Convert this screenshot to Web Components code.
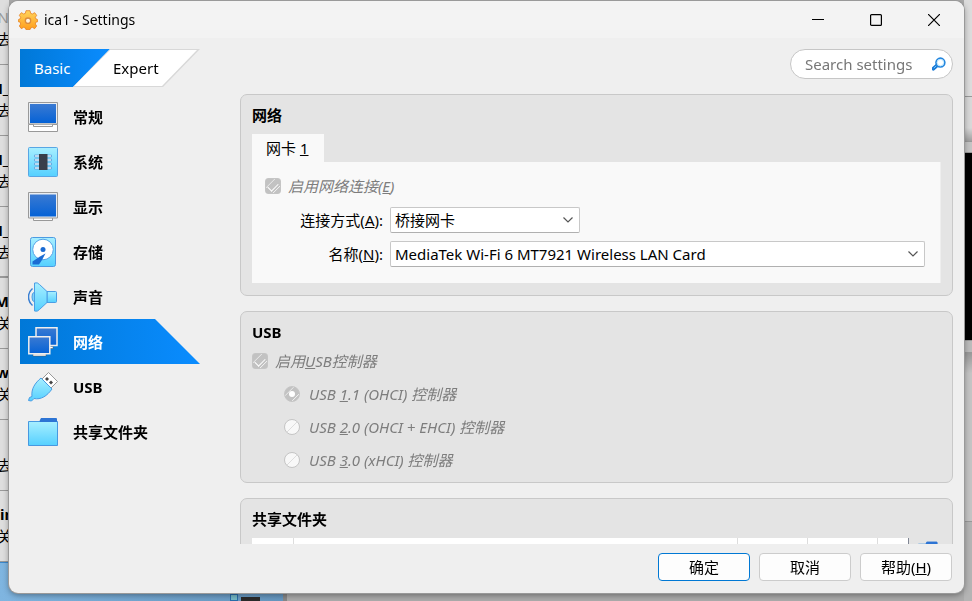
<!DOCTYPE html>
<html lang="zh-CN">
<head>
<meta charset="utf-8">
<title>ica1 - Settings</title>
<style>
body {
    margin: 0;
    min-height: 100vh;
    box-sizing: border-box;
    padding: 1px 8px 8px 9px;
    display: flex;
    overflow: hidden;
    font: 15px/20px "Noto Sans", "Noto Sans CJK SC", sans-serif;
    color: #000;
}
settings-window {
    flex: 1;
}
</style>
</head>
<body>
<desktop-backdrop></desktop-backdrop>
<settings-window heading="ica1 - Settings">
    <mode-tabs slot="header"></mode-tabs>
    <search-box slot="header" placeholder="Search settings"></search-box>

    <nav-list slot="nav">
        <nav-item icon="general">常规</nav-item>
        <nav-item icon="system">系统</nav-item>
        <nav-item icon="display">显示</nav-item>
        <nav-item icon="storage">存储</nav-item>
        <nav-item icon="audio">声音</nav-item>
        <nav-item icon="network" selected>网络</nav-item>
        <nav-item icon="usb">USB</nav-item>
        <nav-item icon="folder">共享文件夹</nav-item>
    </nav-list>

    <settings-section heading="网络">
        <tab-pane>
            <span slot="tab">网卡 <u>1</u></span>
            <choice-field type="checkbox" checked>启用网络连接(<u>E</u>)</choice-field>
            <select-field value="桥接网卡" short>连接方式(<u>A</u>):</select-field>
            <select-field value="MediaTek Wi-Fi 6 MT7921 Wireless LAN Card">名称(<u>N</u>):</select-field>
        </tab-pane>
    </settings-section>

    <settings-section heading="USB">
        <usb-options>
            <choice-field type="checkbox" checked>启用<u>U</u>SB控制器</choice-field>
            <choice-field slot="option" type="radio" checked>USB <u>1</u>.1 (OHCI) 控制器</choice-field>
            <choice-field slot="option" type="radio">USB <u>2</u>.0 (OHCI + EHCI) 控制器</choice-field>
            <choice-field slot="option" type="radio">USB <u>3</u>.0 (xHCI) 控制器</choice-field>
        </usb-options>
    </settings-section>

    <settings-section heading="共享文件夹">
        <folder-table></folder-table>
    </settings-section>

    <push-button slot="footer" primary>确定</push-button>
    <push-button slot="footer">取消</push-button>
    <push-button slot="footer">帮助(<u>H</u>)</push-button>
</settings-window>

<script>
const gradients = `
<defs>
    <linearGradient id="blue" x1="0" y1="0" x2="0" y2="1"><stop offset="0" stop-color="#3a7ad2"/><stop offset="1" stop-color="#0562d6"/></linearGradient>
    <linearGradient id="cyan" x1="0" y1="0" x2="0" y2="1"><stop offset="0" stop-color="#a8efff"/><stop offset="1" stop-color="#55d0ff"/></linearGradient>
    <linearGradient id="gold" x1="0" y1="0" x2="0" y2="1"><stop offset="0" stop-color="#ffd45c"/><stop offset="1" stop-color="#ff9d1c"/></linearGradient>
</defs>`;

const icons = {
    general: `
        <path d="M.5 22.500h29v7H.5z" fill="#fff" stroke="#999"/>
        <path d="M5.500 22.500v2h19v-2" fill="#fff" stroke="#999"/>
        <path d="M.5.5h29v21.500H.5z" fill="#e9edf2" stroke="#999"/>
        <path d="M2 2h26v19H2z" fill="url(#blue)"/>`,
    system: `
        <rect x=".5" y=".5" width="29" height="29" rx="1" fill="url(#cyan)" stroke="#58a6e4"/>
        <g fill="#fff" stroke="#5a9edb" stroke-width=".8"><path d="M6.500 8h17v2h-17zM6.500 12h17v2h-17zM6.500 16h17v2h-17zM6.500 20h17v2h-17z"/></g>
        <path d="M11 7h8.500v16H11z" fill="#383e49"/>`,
    display: `
        <path d="M5.500 25.500v3h19v-3z" fill="#fff" stroke="#999"/>
        <path d="M.5.5h29v25.500H.5z" fill="#e9edf2" stroke="#999"/>
        <path d="M2 2.500h26v22H2z" fill="url(#blue)"/>`,
    storage: `
        <rect x="2.500" y=".5" width="25" height="29" rx="2" fill="url(#cyan)" stroke="#4c9be2"/>
        <circle cx="15" cy="12.500" r="10.300" fill="#fff" stroke="#56a3e6"/>
        <circle cx="15" cy="12.500" r="2.500" fill="#1a6bd3"/>
        <path d="M17.500 16.500L12 19.500 4.500 24.500V27.500H11L14 23z" fill="#1a6bd3"/>`,
    audio: `
        <path d="M4.500 6.500C-.800 11-.800 19 4.500 23.500" fill="none" stroke="#397fd2" stroke-width="1.500"/>
        <ellipse cx="6" cy="15" rx="2" ry="4.500" fill="#7ed4f7" stroke="#4a9de4"/>
        <path d="M19 9.500h8.500q1 0 1 1v9q0 1-1 1H19z" fill="url(#cyan)" stroke="#4a9de4"/>
        <path d="M6.500 1q3-1 5 1.500L19 9.500v11l-7.500 7q-2 2.500-5 1.500z" fill="url(#cyan)" stroke="#4a9de4"/>`,
    network: `
        <path d="M15 19.500h10v2H15z" fill="#fff" stroke="#555" stroke-width=".5"/>
        <path d="M8 .8h21v17.700H8z" fill="url(#blue)" stroke="#eee" stroke-width="1.500"/>
        <path d="M5 27h13v2H5z" fill="#fff" stroke="#555" stroke-width=".5"/>
        <path d="M.8 9.800h21v17H.8z" fill="url(#blue)" stroke="#eee" stroke-width="1.500"/>`,
    usb: `
        <path d="M14 7L20.500.5 29.500 9.500 23 16z" fill="#fff" stroke="#999"/>
        <path d="M19 5l2 2-2 2-2-2zM23 8.500l2 2-2 2-2-2z" fill="#444"/>
        <path d="M13 6L24 17C19 24 13 28 6 26.500L3.500 29 .5 28.500 1.500 25.500 4 24.500C3 17 7 11 13 6z" fill="url(#cyan)" stroke="#4a9de4"/>`,
    folder: `
        <path d="M11 5l2-4h15l1 1v5H11z" fill="#2d74d4"/>
        <path d="M.5 4.500h29V28.500H.5z" fill="url(#cyan)" stroke="#4798e0"/>
        <path d="M11.500 5l2-4h14.500l1 1v3z" fill="#2d74d4"/>`,
    gear: `
        <path d="M12 1h6l1 4 2.500 1L25 4l3 4-2 3 1 2.500 2.500 1v3L27 18l-1 3 2 3-3 4-3.500-2-2.500 1-1 2.500h-6L11 27l-2.500-1L5 28l-3-4 2-3-1-3-2.500-.5v-3l2.500-1L4 11 2 8l3-4 3.500 2L11 5z" fill="url(#gold)" stroke="#e78222" stroke-width="1.200" stroke-linejoin="round"/>
        <circle cx="15" cy="16" r="4" fill="#fff3df" stroke="#db8c3e" stroke-width="2"/>`,
    search: `
        <path d="M11 18l-8 7" stroke="#1879d6" stroke-width="8" stroke-linecap="round"/>
        <path d="M10 18l-6 6" stroke="#79cbff" stroke-width="2"/>
        <circle cx="18" cy="12" r="9.500" fill="#fff" stroke="#2385de" stroke-width="3.500"/>
        <circle cx="18" cy="12" r="7" fill="none" stroke="#9ddcff" stroke-width="1.500"/>`
};

function icon(name, size) {
    return `<svg width="${size}" height="${size}" viewBox="0 0 30 30" aria-hidden="true">${gradients}${icons[name]}</svg>`;
}

// Attaches an open shadow root with the given markup
class BaseElement extends HTMLElement {
    constructor() {
        super();
        this.attachShadow({mode: 'open'});
    }

    connectedCallback() {
        this.shadowRoot.innerHTML = `<style>* { box-sizing: border-box; } button, input, select { font: inherit; margin: 0; } svg { display: block; flex: none; }</style>` + this.render();
    }
}

class DesktopBackdrop extends BaseElement {
    render() {
        const rows = [['N', '去'], ['N_', '去'], ['N_', '去'], ['N_', '去'], ['M', '关'], ['w', '关'], ['', '去'], ['in', '关']];
        return `
<style>
:host {
    position: fixed;
    inset: 0;
    z-index: -1;
    display: grid;
    grid-template-columns: 287px 1fr 8px;
    background: #ababab;
}
.machines {
    display: grid;
    grid-template-rows: 65px repeat(7, 71px) 1fr;
    overflow: hidden;
    border-right: 4px solid #888;
}
.machine {
    width: 9px;
    overflow: hidden;
    display: flex;
    flex-direction: column;
    justify-content: flex-end;
    gap: 2px;
    padding-bottom: 15px;
    border-bottom: 1px solid #999;
    background: #dedede;
}
.machine b { height: 20px; align-self: flex-end; }
.machine span { height: 20px; align-self: center; }
.machine:first-child b { color: #999; font-weight: 400; }
.machine:nth-child(4) { border-bottom-width: 2px; padding-bottom: 14px; }
.machine:nth-child(8) b { align-self: flex-start; }
.current {
    display: flex;
    align-items: flex-end;
    gap: 3px;
    padding-left: 230px;
    border-top: 1px solid #3b88cc;
    background: linear-gradient(90deg, #7fb5e0, #6697c0);
}
.current i { width: 8px; height: 7px; background: #75b9c7; border: 1px solid #286daa; }
.current i + i { width: 19px; height: 4px; border: 0; background: #2b2b2b; }
.side {
    grid-column: 3;
    display: grid;
    grid-template-rows: 97px 45px 11px 188px 12px 169px 1fr;
}
.side div { border-bottom: 1px solid #999; background: #dcdcdc; }
.side div:nth-child(2) { background: linear-gradient(#d8d8d8 70%, #a0a0a0); }
.side div:nth-child(3) { background: #c4c4c4; }
.side div:nth-child(4) { background: #000; }
.side div:nth-child(5) { background: #bbb; }
.side div:nth-child(6) { background: linear-gradient(#999, #c4c4c4 12%, #c4c4c4); }
.side div:nth-child(7) { background: #b4b4b4; border: 0; }
</style>
<div class="machines">
    ${rows.map(([name, state]) => `<div class="machine"><b>${name}</b><span>${state}</span></div>`).join('')}
    <div class="current"><i></i><i></i></div>
</div>
<div class="side">${'<div></div>'.repeat(7)}</div>`;
    }
}

class SettingsWindow extends BaseElement {
    render() {
        return `
<style>
:host {
    display: flex;
    flex-direction: column;
    height: calc(100vh - 9px);
    box-sizing: border-box;
    min-width: 0;
    overflow: hidden;
    border-radius: 9px;
    background: #efefef;
    box-shadow: 0 0 0 1px #999, 0 2px 6px rgba(0, 0, 0, .4);
}
.titlebar {
    display: flex;
    align-items: center;
    height: 37px;
    flex: none;
    padding: 0 1px 0 9px;
    background: #f3f3f3;
}
h1 {
    flex: 1;
    margin: 0 0 0 6px;
    font-size: 14px;
    font-weight: 400;
}
.titlebar button {
    width: 58px;
    height: 36px;
    padding: 0;
    border: 0;
    background: none;
    display: grid;
    place-items: center;
}
button path, button rect { fill: none; stroke: #000; stroke-width: 1.200; }
header {
    display: flex;
    justify-content: space-between;
    align-items: flex-start;
    height: 38px;
    flex: none;
    margin: 11px 11px 7px;
}
main {
    flex: 1;
    min-height: 0;
    display: flex;
    gap: 40px;
    padding: 0 11px;
}
.content {
    flex: 1;
    min-width: 0;
    display: flex;
    flex-direction: column;
    gap: 15px;
    overflow: hidden;
}
footer {
    flex: none;
    display: flex;
    justify-content: flex-end;
    gap: 9px;
    padding: 9px 12px 12px;
}
</style>
<div class="titlebar">
    ${icon('gear', 20)}
    <h1>${this.getAttribute('heading')}</h1>
    <button aria-label="Minimize"><svg width="12" height="12"><path d="M0 5.500h12"/></svg></button>
    <button aria-label="Maximize"><svg width="12" height="12"><rect x=".6" y=".6" width="10.800" height="10.800" rx="1"/></svg></button>
    <button aria-label="Close"><svg width="12" height="12"><path d="M0 0l12 12M12 0L0 12"/></svg></button>
</div>
<header><slot name="header"></slot></header>
<main>
    <slot name="nav"></slot>
    <div class="content"><slot></slot></div>
</main>
<footer><slot name="footer"></slot></footer>`;
    }
}

class ModeTabs extends BaseElement {
    render() {
        return `
<style>
:host { display: flex; }
button {
    position: relative;
    height: 38px;
    border: 0;
    text-align: left;
    z-index: 0;
}
.basic {
    width: 90px;
    padding: 0 0 0 14px;
    color: #fff;
    background: linear-gradient(90deg, #0078d7, #0a8cff);
    clip-path: polygon(0 0, 100% 0, calc(100% - 37px) 100%, 0 100%);
}
.expert {
    width: 127px;
    margin-left: -37px;
    padding: 0 0 0 40px;
    color: #000;
    background: #d8d8d8;
    clip-path: polygon(37px 0, 100% 0, calc(100% - 37px) 100%, 0 100%);
}
.expert::before {
    content: '';
    position: absolute;
    inset: 1px;
    z-index: -1;
    background: #fff;
    clip-path: polygon(36px 0, calc(100% - 2px) 0, calc(100% - 37px) 100%, 0 100%);
}
</style>
<button class="basic">Basic</button>
<button class="expert">Expert</button>`;
    }
}

class SearchBox extends BaseElement {
    render() {
        const text = this.getAttribute('placeholder');
        return `
<style>
:host {
    display: flex;
    align-items: center;
    box-sizing: border-box;
    width: 163px;
    height: 30px;
    padding: 0 6px 0 14px;
    border: 1px solid #c6c6c6;
    border-radius: 15px;
    background: #fff;
}
input {
    flex: 1;
    min-width: 0;
    padding: 0;
    border: 0;
    outline: 0;
    background: none;
}
input::placeholder { color: #777; }
</style>
<input type="search" placeholder="${text}" aria-label="${text}">
${icon('search', 14)}`;
    }
}

class NavList extends BaseElement {
    render() {
        return `
<style>
:host { display: block; width: 180px; flex: none; }
nav { display: flex; flex-direction: column; }
</style>
<nav><slot></slot></nav>`;
    }
}

class NavItem extends BaseElement {
    render() {
        return `
<style>
:host { display: block; }
a {
    display: flex;
    align-items: center;
    gap: 15px;
    height: 45px;
    padding-left: 8px;
    color: inherit;
    font-weight: 700;
    text-decoration: none;
}
:host([selected]) a {
    color: #fff;
    background: linear-gradient(90deg, #0078d7, #0a8cff);
    clip-path: polygon(0 0, calc(100% - 45px) 0, 100% 100%, 0 100%);
}
</style>
<a href="#${this.getAttribute('icon')}">${icon(this.getAttribute('icon'), 30)}<span><slot></slot></span></a>`;
    }
}

class SettingsSection extends BaseElement {
    render() {
        return `
<style>
:host {
    display: block;
    flex: none;
    box-sizing: border-box;
    padding: 10px 11px 12px;
    border: 1px solid #c8c8c8;
    border-radius: 7px;
    background: #e4e4e4;
}
h2 {
    margin: 0 0 9px;
    font-size: 15px;
    line-height: 20px;
}
</style>
<section>
    <h2>${this.getAttribute('heading')}</h2>
    <slot></slot>
</section>`;
    }
}

class TabPane extends BaseElement {
    render() {
        return `
<style>
:host { display: block; }
button {
    display: block;
    height: 28px;
    padding: 0 15px 0 14px;
    border: 0;
    background: #f9f9f9;
    color: #000;
}
.pane {
    display: flex;
    flex-direction: column;
    gap: 8px;
    padding: 14px 15px 16px 13px;
    border-right: 1px solid #eee;
    background: #f9f9f9;
}
::slotted(choice-field) { margin-bottom: 3px; }
</style>
<button role="tab" aria-selected="true"><slot name="tab"></slot></button>
<div class="pane" role="tabpanel"><slot></slot></div>`;
    }
}

class ChoiceField extends BaseElement {
    render() {
        const checked = this.hasAttribute('checked') ? 'checked' : '';
        return `
<style>
:host { display: block; }
label {
    display: flex;
    width: fit-content;
    align-items: center;
    gap: 7px;
    height: 20px;
    font-style: italic;
    color: #7d7d7d;
}
:host([type="radio"]) label { gap: 9px; }
input {
    appearance: none;
    display: grid;
    place-items: center;
    width: 16px;
    height: 16px;
    border: 1px solid #c5c5c5;
    border-radius: 3px;
    background: linear-gradient(135deg, #f8f8f8 48%, #ddd 50%, #f8f8f8 53%);
}
input[type="radio"] { border-radius: 50%; }
input:checked {
    background: linear-gradient(135deg, #c2c2c2 28%, #eee 31%, #c2c2c2 35%, #c2c2c2 72%, #eee 75%, #c2c2c2 79%);
}
input[type="checkbox"]:checked::before {
    content: '';
    width: 9px;
    height: 5px;
    border: solid #fff;
    border-width: 0 0 1px 1px;
    transform: rotate(-45deg);
}
input[type="radio"]:checked::before {
    content: '';
    width: 6px;
    height: 6px;
    border-radius: 50%;
    background: #fff;
}
</style>
<label><input type="${this.getAttribute('type')}" ${checked} disabled><span><slot></slot></span></label>`;
    }
}

class SelectField extends BaseElement {
    render() {
        return `
<style>
:host {
    display: grid;
    grid-template-columns: 118px 1fr;
    align-items: center;
    gap: 7px;
}
label { text-align: right; }
.control {
    display: grid;
    grid-template-columns: 1fr 17px;
    align-items: center;
}
:host([short]) .control { width: 190px; }
select {
    grid-area: 1 / 1 / 2 / 3;
    appearance: none;
    width: 100%;
    height: 26px;
    padding: 0 22px 0 4px;
    border: 1px solid #c8c8c8;
    border-bottom-color: #b0b0b0;
    border-radius: 2px;
    background: #fff;
    color: #000;
}
svg {
    grid-area: 1 / 2;
    pointer-events: none;
}
</style>
<label for="field"><slot></slot></label>
<div class="control">
    <select id="field"><option>${this.getAttribute('value')}</option></select>
    <svg width="10" height="6"><path d="M.5.5L5 5 9.500.5" fill="none" stroke="#555" stroke-width="1.200"/></svg>
</div>`;
    }
}

class UsbOptions extends BaseElement {
    render() {
        return `
<style>
:host { display: block; }
div {
    display: flex;
    flex-direction: column;
    gap: 13px;
    margin-top: 13px;
    padding-left: 32px;
}
</style>
<slot></slot>
<div role="radiogroup"><slot name="option"></slot></div>`;
    }
}

class FolderTable extends BaseElement {
    render() {
        return `
<style>
:host { display: flex; gap: 9px; align-items: flex-start; }
table {
    flex: 1;
    table-layout: fixed;
    border-collapse: collapse;
    background: #fff;
    border-right: 1px solid #808694;
}
th { height: 26px; padding: 0; }
th + th { border-left: 1px solid #ddd; }
.icon { width: 41px; }
.flag { width: 70px; }
.last { width: 31px; }
button { margin: 3px 3px 0 0; padding: 0; border: 0; background: none; }
</style>
<table>
    <thead><tr><th class="icon"></th><th></th><th class="flag"></th><th class="flag"></th><th class="last"></th></tr></thead>
</table>
<button aria-label="Add">${icon('folder', 20)}</button>`;
    }
}

class PushButton extends BaseElement {
    render() {
        return `
<style>
:host { display: block; }
button {
    min-width: 92px;
    height: 28px;
    padding: 0 8px;
    border: 1px solid #ccc;
    border-radius: 4px;
    background: #fdfdfd;
    color: #000;
}
:host([primary]) button { border-color: #0078d4; }
</style>
<button><slot></slot></button>`;
    }
}

customElements.define('desktop-backdrop', DesktopBackdrop);
customElements.define('settings-window', SettingsWindow);
customElements.define('mode-tabs', ModeTabs);
customElements.define('search-box', SearchBox);
customElements.define('nav-list', NavList);
customElements.define('nav-item', NavItem);
customElements.define('settings-section', SettingsSection);
customElements.define('tab-pane', TabPane);
customElements.define('choice-field', ChoiceField);
customElements.define('select-field', SelectField);
customElements.define('usb-options', UsbOptions);
customElements.define('folder-table', FolderTable);
customElements.define('push-button', PushButton);
</script>
</body>
</html>
